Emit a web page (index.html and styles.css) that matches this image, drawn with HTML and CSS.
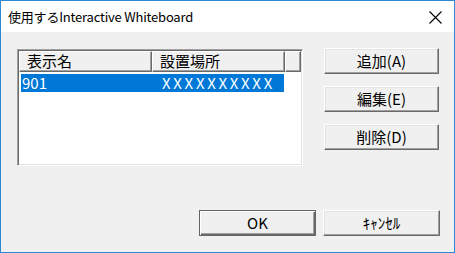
FILE: index.html
```html
<!DOCTYPE html>
<html lang="ja">
<head>
    <meta charset="UTF-8">
    <title>使用するInteractive Whiteboard</title>
    <link rel="stylesheet" href="styles.css">
</head>
<body>
<div class="window">
    <div class="titlebar">
        <span class="title">使用するInteractive Whiteboard</span>
        <span class="close">
            <svg width="13" height="13" viewBox="0 0 13 13">
                <path d="M0.5 0.5 L12.5 12.5 M12.5 0.5 L0.5 12.5" stroke="#000" stroke-width="1.1" fill="none"/>
            </svg>
        </span>
    </div>

    <div class="content">
        <div class="top">
            <div class="listview">
                <div class="lv-header">
                    <div class="col c1">表示名</div>
                    <div class="col c2">設置場所</div>
                    <div class="col c3"></div>
                </div>
                <div class="lv-row selected">
                    <div class="cell c1">901</div>
                    <div class="cell c2 code">XXXXXXXXXX</div>
                </div>
            </div>
            <div class="side-buttons">
                <button class="btn">追加(A)</button>
                <button class="btn">編集(E)</button>
                <button class="btn">削除(D)</button>
            </div>
        </div>

        <div class="bottom">
            <button class="btn wide default">OK</button>
            <button class="btn wide">ｷｬﾝｾﾙ</button>
        </div>
    </div>
</div>
</body>
</html>
```

FILE: styles.css
```css
body {
    margin: 0;
    padding: 0;
    font-family: "Noto Sans CJK JP", "Noto Sans", sans-serif;
    color: #000;
    background: #f0f0f0;
}

.window {
    width: 455px;
    height: 253px;
    box-sizing: border-box;
    border: 1px solid #2b8ad6;
    display: flex;
    flex-direction: column;
    background: #f0f0f0;
}

.titlebar {
    height: 31px;
    background: #fff;
    display: flex;
    align-items: center;
    justify-content: space-between;
    padding: 0 12px 0 7px;
    flex-shrink: 0;
}

.title {
    font-size: 13px;
    line-height: 16px;
    letter-spacing: -0.2px;
}

.close {
    display: flex;
    margin-top: 1px;
}

.content {
    flex: 1;
    display: flex;
    flex-direction: column;
    padding: 16px 0 16px 16px;
}

.top {
    display: flex;
    align-items: flex-start;
}

/* list view */
.listview {
    margin-top: 1px;
    width: 286px;
    height: 117px;
    box-sizing: border-box;
    background: #fff;
    border: 1px solid;
    border-color: #a0a0a0 #fff #fff #a0a0a0;
    box-shadow: inset 1px 1px 0 #696969, inset -1px -1px 0 #e3e3e3;
    padding: 1px;
    font-size: 15px;
}

.lv-header {
    display: flex;
    height: 21px;
}

.col {
    box-sizing: border-box;
    background: #f0f0f0;
    border-top: 1px solid #fff;
    border-left: 1px solid #fff;
    border-right: 1px solid #696969;
    border-bottom: 1px solid #696969;
    box-shadow: inset -1px -1px 0 #a0a0a0;
    line-height: 18px;
    padding-left: 7px;
    white-space: nowrap;
}

.col.c1 { width: 133px; }
.col.c2 { width: 133px; }
.col.c3 { flex: 1; }

.lv-row {
    display: flex;
    height: 18px;
    margin: 2px 0 0 2px;
    width: 263px;
    line-height: 18px;
}

.lv-row.selected {
    background: #0078d7;
    color: #fff;
}

.cell.c1 {
    width: 130px;
    padding-left: 1px;
    box-sizing: border-box;
}

.cell.c2 {
    width: 133px;
    padding-left: 11px;
    box-sizing: border-box;
}

.code {
    letter-spacing: 2.7px;
}

/* buttons */
.side-buttons {
    display: flex;
    flex-direction: column;
    gap: 12px;
    margin-left: 21px;
}

.btn {
    width: 115px;
    height: 26px;
    box-sizing: border-box;
    font-family: inherit;
    font-size: 15px;
    line-height: 18px;
    color: #000;
    background: #f0f0f0;
    border: 1px solid;
    border-color: #fff #696969 #696969 #fff;
    box-shadow: inset -1px -1px 0 #a0a0a0, inset 1px 1px 0 #e3e3e3;
    padding: 0;
    margin: 0;
}

.bottom {
    margin-top: auto;
    display: flex;
    justify-content: flex-end;
    gap: 7px;
    padding-right: 14px;
}

.btn.wide {
    width: 117px;
}

.btn.default {
    border-color: #646464;
    box-shadow: inset 1px 1px 0 #fff, inset -1px -1px 0 #696969, inset -2px -2px 0 #a0a0a0;
}
```
